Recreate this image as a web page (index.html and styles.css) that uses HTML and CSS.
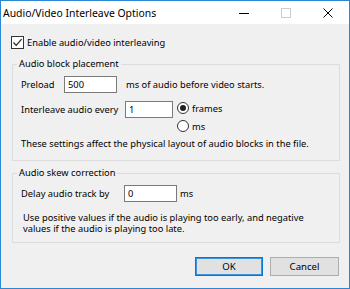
FILE: index.html
```html
<!DOCTYPE html>
<html lang="en">
<head>
    <meta charset="UTF-8">
    <title>Audio/Video Interleave Options</title>
    <link rel="stylesheet" href="styles.css">
</head>
<body>
    <div class="window">
        <!-- Заголовок окна -->
        <div class="titlebar">
            <span class="title">Audio/Video Interleave Options</span>
            <div class="caption-buttons">
                <span class="cap-btn">
                    <svg width="10" height="10" viewBox="0 0 10 10"><path d="M0 5.5H10" stroke="#000" stroke-width="1"/></svg>
                </span>
                <span class="cap-btn">
                    <svg width="10" height="10" viewBox="0 0 10 10"><rect x="0.5" y="0.5" width="9" height="9" fill="none" stroke="#cccccc" stroke-width="1"/></svg>
                </span>
                <span class="cap-btn">
                    <svg width="10" height="10" viewBox="0 0 10 10"><path d="M0.5 0.5L9.5 9.5M9.5 0.5L0.5 9.5" stroke="#000" stroke-width="1"/></svg>
                </span>
            </div>
        </div>

        <!-- Содержимое диалога -->
        <div class="dialog">
            <div class="check-row">
                <span class="checkbox">
                    <svg width="11" height="11" viewBox="0 0 11 11"><path d="M1.5 5.5L4.2 8.3L9.6 2.2" fill="none" stroke="#222" stroke-width="1.2"/></svg>
                </span>
                <span>Enable audio/video interleaving</span>
            </div>

            <fieldset class="group group-placement">
                <legend>Audio block placement</legend>
                <div class="row">
                    <span class="field-label label-preload">Preload</span>
                    <span class="textbox box-wide">500</span>
                    <span class="suffix suffix-preload">ms of audio before video starts.</span>
                </div>
                <div class="row row-interleave">
                    <span class="field-label label-interleave">Interleave audio every</span>
                    <span class="textbox box-narrow">1</span>
                    <div class="radios">
                        <div class="radio-row"><span class="radio checked"></span>frames</div>
                        <div class="radio-row"><span class="radio"></span>ms</div>
                    </div>
                </div>
                <p class="note">These settings affect the physical layout of audio blocks in the file.</p>
            </fieldset>

            <fieldset class="group group-skew">
                <legend>Audio skew correction</legend>
                <div class="row">
                    <span class="field-label label-delay">Delay audio track by</span>
                    <span class="textbox box-wide">0</span>
                    <span class="suffix suffix-ms">ms</span>
                </div>
                <p class="hint">Use positive values if the audio is playing too early, and negative<br>values if the audio is playing too late.</p>
            </fieldset>

            <div class="buttons">
                <button class="btn btn-default">OK</button>
                <button class="btn btn-cancel">Cancel</button>
            </div>
        </div>
    </div>
</body>
</html>
```

FILE: styles.css
```css
/* Общие стили */
* {
    box-sizing: border-box;
}
body {
    margin: 0;
    font-family: "Noto Sans", sans-serif;
    font-size: 9.3px;
    color: #000;
}
.window {
    width: 350px;
    height: 289px;
    border: 1px solid #2b87d6;
    background: #f0f0f0;
    display: flex;
    flex-direction: column;
}

/* Заголовок */
.titlebar {
    height: 23px;
    background: #ffffff;
    display: flex;
    align-items: center;
    padding-left: 2px;
}
.title {
    font-size: 10.4px;
}
.caption-buttons {
    margin-left: auto;
    display: flex;
    height: 100%;
}
.cap-btn {
    width: 42px;
    height: 100%;
    display: flex;
    align-items: center;
    justify-content: center;
}

/* Диалог */
.dialog {
    flex: 1;
    padding: 12px 9px 0 11px;
    display: flex;
    flex-direction: column;
    white-space: nowrap;
}
.check-row {
    display: flex;
    align-items: center;
    height: 13px;
    margin-left: -1px;
    gap: 3px;
}
.checkbox {
    width: 13px;
    height: 13px;
    border: 1px solid #333;
    background: #fff;
    display: flex;
    align-items: center;
    justify-content: center;
}

.group {
    margin: 0;
    border: 1px solid #dcdcdc;
    padding: 6px 8px 10px;
    min-inline-size: auto;
}
.group legend {
    padding: 0 2px;
    margin-left: -4px;
    line-height: 12px;
}
.group-placement {
    margin-top: 9px;
}
.group-skew {
    margin-top: 6px;
    padding-bottom: 8px;
}

.row {
    display: flex;
    align-items: center;
    height: 17px;
}
.row-interleave {
    align-items: flex-start;
    height: auto;
    margin-top: 6px;
}
.row-interleave .field-label,
.row-interleave .textbox {
    margin-top: 2px;
}
.field-label {
    line-height: 17px;
}
.label-preload {
    width: 43px;
}
.label-interleave {
    width: 104px;
}
.label-delay {
    width: 103px;
}
.textbox {
    height: 17px;
    background: #fff;
    border: 1px solid #7a7a7a;
    padding-left: 3px;
    line-height: 15px;
}
.box-wide {
    width: 53px;
}
.box-narrow {
    width: 48px;
}
.suffix-preload {
    margin-left: 9px;
}
.suffix-ms {
    margin-left: 3px;
}

.radios {
    margin-left: 4px;
    display: flex;
    flex-direction: column;
}
.radio-row {
    height: 18px;
    display: flex;
    align-items: center;
    gap: 3px;
}
.radio {
    width: 12px;
    height: 12px;
    border: 1px solid #333;
    border-radius: 50%;
    background: #fff;
    display: flex;
    align-items: center;
    justify-content: center;
}
.radio.checked::after {
    content: "";
    width: 6px;
    height: 6px;
    border-radius: 50%;
    background: #222;
}

.note {
    margin: 3px 0 0;
    line-height: 12px;
}
.hint {
    margin: 10px 0 0 2px;
    line-height: 11px;
}

/* Кнопки */
.buttons {
    margin-top: 14px;
    margin-right: 1px;
    display: flex;
    justify-content: flex-end;
    gap: 7px;
}
.btn {
    height: 19px;
    font-family: inherit;
    font-size: 9.6px;
    background: #e1e1e1;
    border: 1px solid #adadad;
    padding: 0;
}
.btn-default {
    width: 68px;
    border-color: #0078d7;
    box-shadow: inset 0 0 0 1px #3c95de;
}
.btn-cancel {
    width: 69px;
}
```
